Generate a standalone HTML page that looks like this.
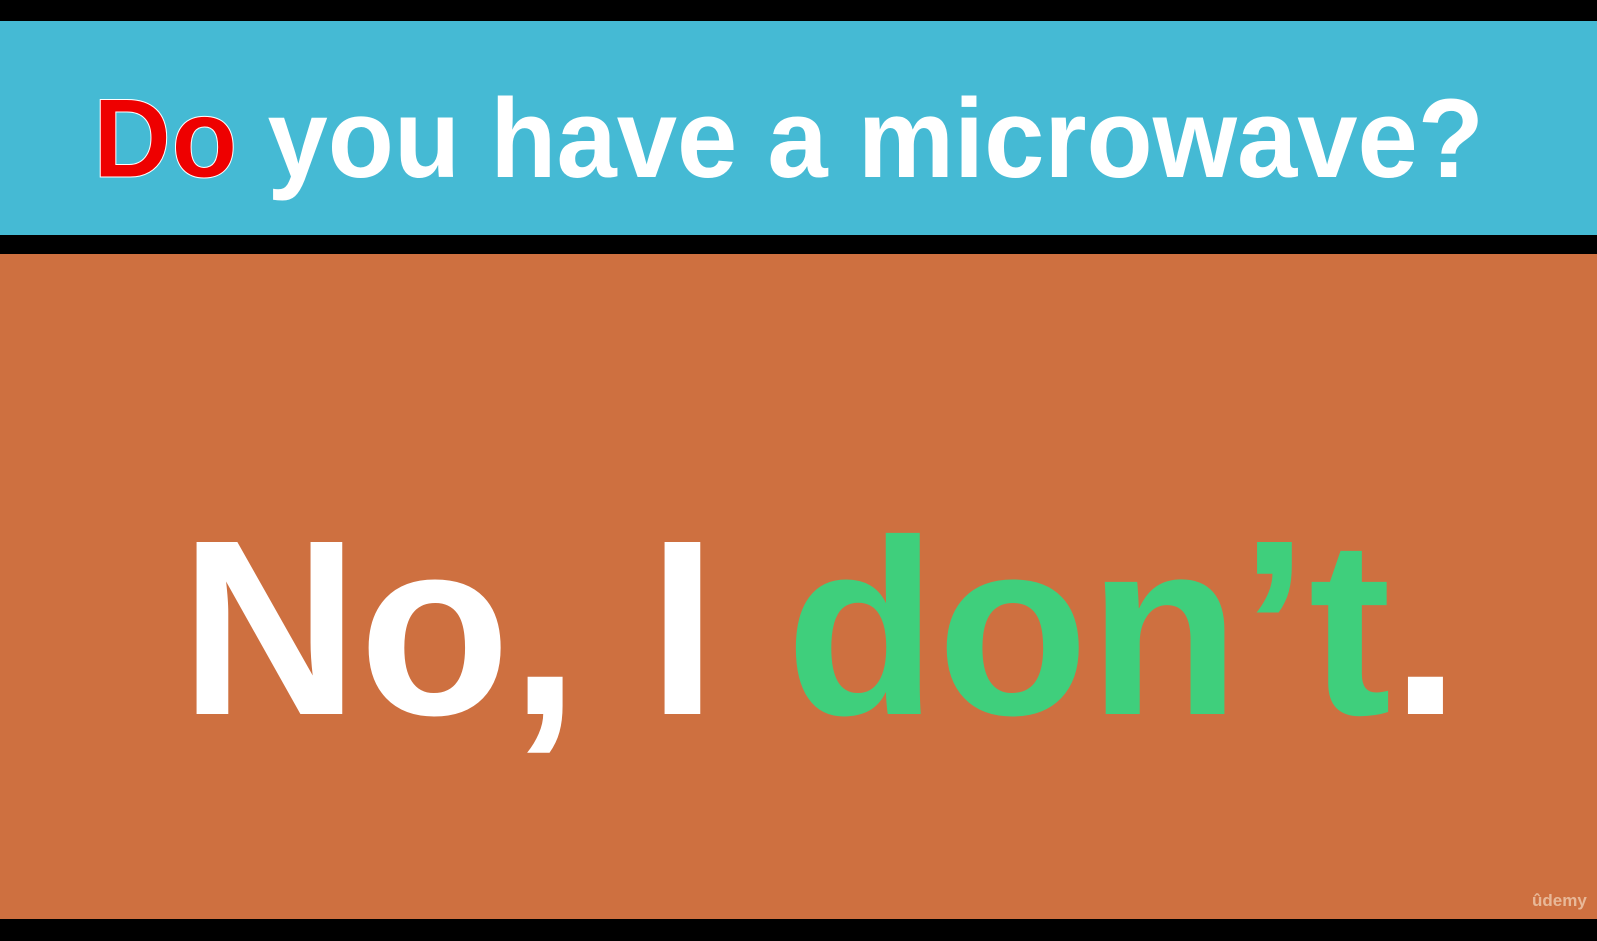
<!DOCTYPE html>
<html><head><style>html,body{margin:0;padding:0;background:#000;width:1597px;height:941px;overflow:hidden}</style></head>
<body>
<svg width="1597" height="941" viewBox="0 0 1597 941" xmlns="http://www.w3.org/2000/svg" style="display:block">
<rect width="1597" height="941" fill="#000"/>
<rect x="0" y="21" width="1597" height="214" fill="#45BAD4"/>
<rect x="0" y="254" width="1597" height="665" fill="#CE7040"/>
<text x="93" y="177" font-family="Liberation Sans, sans-serif" font-weight="bold" font-size="112" textLength="1391" lengthAdjust="spacingAndGlyphs" fill="#fff"><tspan fill="#EE0000" stroke="#fff" stroke-width="1">Do</tspan> you have a microwave?</text>
<text x="180" y="714" font-family="Liberation Sans, sans-serif" font-weight="bold" font-size="250" textLength="1280" lengthAdjust="spacingAndGlyphs" fill="#fff">No, I <tspan fill="#3FCF7C">don’t</tspan>.</text>
<text x="1532" y="906" font-family="Liberation Sans, sans-serif" font-weight="bold" font-size="17" fill="#e8b898">ûdemy</text>
</svg>
</body></html>
